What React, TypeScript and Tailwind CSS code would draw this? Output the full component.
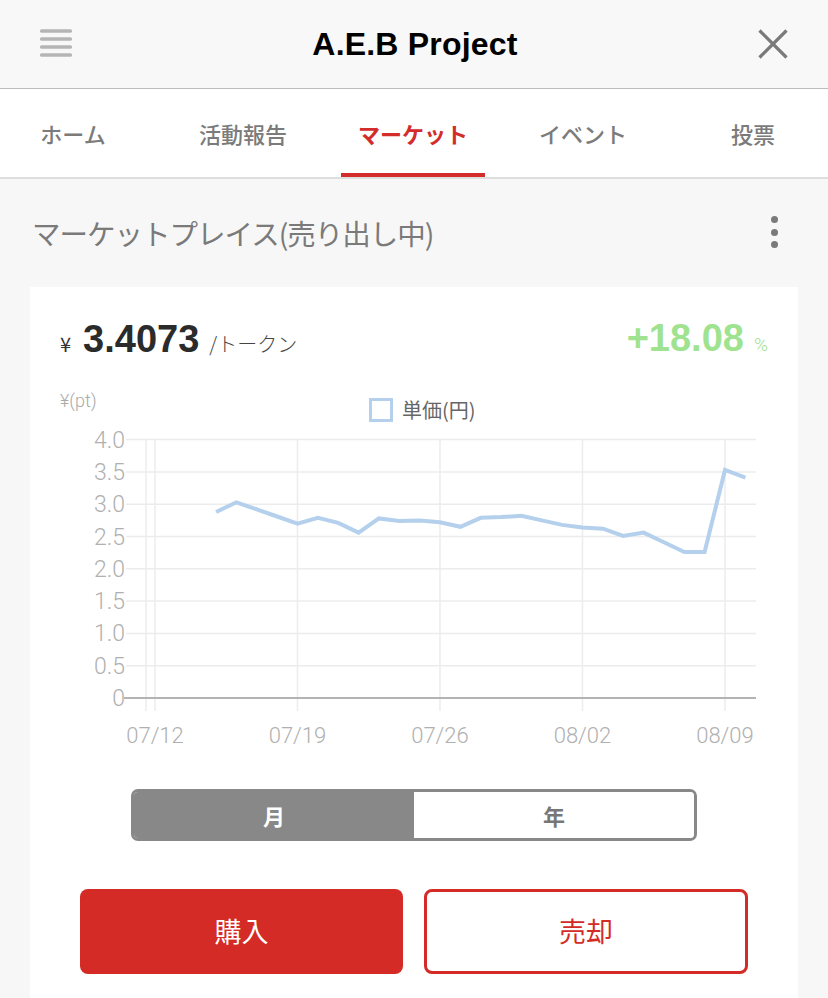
import React from "react";

const JP = '"Noto Sans CJK JP", "Liberation Sans", sans-serif';

const values: number[] = [
  2.88, 3.03, 2.92, 2.81, 2.7, 2.79, 2.71, 2.56, 2.78, 2.74, 2.75, 2.72, 2.65,
  2.79, 2.8, 2.82, 2.75, 2.68, 2.64, 2.62, 2.51, 2.56, 2.41, 2.26, 2.26, 3.53,
  3.41,
];

const dx = (d: number) => 155 + d * 20.357;
const vy = (v: number) => 699 - v * 64.6;

function Chart() {
  const yTicks = [
    { v: 4, l: "4.0" },
    { v: 3.5, l: "3.5" },
    { v: 3, l: "3.0" },
    { v: 2.5, l: "2.5" },
    { v: 2, l: "2.0" },
    { v: 1.5, l: "1.5" },
    { v: 1, l: "1.0" },
    { v: 0.5, l: "0.5" },
    { v: 0, l: "0" },
  ];
  const xTicks = [
    { d: 0, l: "07/12" },
    { d: 7, l: "07/19" },
    { d: 14, l: "07/26" },
    { d: 21, l: "08/02" },
    { d: 28, l: "08/09" },
  ];
  const pts = values.map((v, i) => `${dx(i + 3).toFixed(1)},${vy(v).toFixed(1)}`).join(" ");
  return (
    <svg width="768" height="385" viewBox="30 380 768 385" className="block">
      <text x="60" y="408" fontSize="18" fill="#aaaaaa" fontFamily="Roboto, sans-serif" fontWeight="300">
        ¥(pt)
      </text>
      <rect x="370.5" y="400.5" width="21" height="21" fill="none" stroke="#b4d0ec" strokeWidth="3" />
      <text x="402" y="419" fontSize="20" fill="#666666" fontFamily={JP}>
        単価(円)
      </text>
      {yTicks.map((t) =>
        t.v === 0 ? null : (
          <line key={t.l} x1="126" x2="756" y1={vy(t.v)} y2={vy(t.v)} stroke="#ececec" strokeWidth="1.5" />
        )
      )}
      <line x1="146" x2="146" y1={vy(4)} y2="712" stroke="#ececec" strokeWidth="1.5" />
      {xTicks.map((t) => (
        <line key={t.l} x1={dx(t.d)} x2={dx(t.d)} y1={vy(4)} y2="712" stroke="#ececec" strokeWidth="1.5" />
      ))}
      <line x1="124" x2="756" y1="699" y2="699" stroke="#b3b3b3" strokeWidth="2" />
      {yTicks.map((t) => (
        <text
          key={t.l}
          x="125"
          y={vy(t.v) + 8}
          fontSize="23"
          textAnchor="end"
          fill="#b0b0b0"
          fontFamily="Roboto, sans-serif"
          fontWeight="300"
        >
          {t.l}
        </text>
      ))}
      {xTicks.map((t) => (
        <text
          key={t.l}
          x={dx(t.d)}
          y="744"
          fontSize="22"
          textAnchor="middle"
          fill="#b0b0b0"
          fontFamily="Roboto, sans-serif"
          fontWeight="300"
        >
          {t.l}
        </text>
      ))}
      <polyline points={pts} fill="none" stroke="#b4d0ec" strokeWidth="4" strokeLinejoin="miter" />
    </svg>
  );
}

export default function App() {
  const tabs = ["ホーム", "活動報告", "マーケット", "イベント", "投票"];
  return (
    <div className="w-[828px] h-[998px] overflow-hidden bg-[#f7f7f7] flex flex-col" style={{ fontFamily: JP }}>
      {/* Header */}
      <div className="h-[89px] shrink-0 bg-[#f8f8f8] border-b border-[#bdbdbd] flex items-center justify-between px-[40px]">
        <svg width="32" height="32" viewBox="0 0 32 32">
          {[3, 11, 19, 27].map((y) => (
            <rect key={y} x="0" y={y - 1.75} width="32" height="3.5" rx="1.5" fill="#b5b5b5" />
          ))}
        </svg>
        <div
          className="text-[32px] font-bold text-black leading-none tracking-[0.2px]"
          style={{ fontFamily: '"Liberation Sans", Arial, sans-serif' }}
        >
          A.E.B Project
        </div>
        <svg width="30" height="30" viewBox="0 0 30 30">
          <path d="M1.5 1.5 L28.5 28.5 M28.5 1.5 L1.5 28.5" stroke="#7a7a7a" strokeWidth="3.2" />
        </svg>
      </div>

      {/* Tabs */}
      <div className="h-[90px] shrink-0 bg-white border-b-2 border-[#dedede] overflow-hidden">
        <div className="flex h-full ml-[-12px]">
          {tabs.map((t, i) => (
            <div key={t} className="w-[170px] shrink-0 h-full flex flex-col items-center">
              <div className="flex-1 flex items-center pt-[4px]">
                <span
                  className={
                    i === 2
                      ? "text-[22px] font-bold text-[#d22d2b] leading-none"
                      : "text-[22px] font-medium text-[#7b7b7b] leading-none"
                  }
                >
                  {t}
                </span>
              </div>
              <div className={i === 2 ? "h-[4px] w-[144px] bg-[#d22d2b]" : "h-[4px] w-[144px]"} />
            </div>
          ))}
        </div>
      </div>

      {/* Section title */}
      <div className="h-[108px] shrink-0 flex items-center justify-between pl-[32px] pr-[50px]">
        <span className="text-[28.5px] text-[#7a7a7a] leading-none tracking-[-1px]">
          マーケットプレイス(売り出し中)
        </span>
        <div className="flex flex-col gap-[5.5px] items-center pb-[2px]">
          <div className="w-[7px] h-[7px] rounded-full bg-[#7a7a7a]" />
          <div className="w-[7px] h-[7px] rounded-full bg-[#7a7a7a]" />
          <div className="w-[7px] h-[7px] rounded-full bg-[#7a7a7a]" />
        </div>
      </div>

      {/* Card */}
      <div className="mx-[30px] flex-1 bg-white flex flex-col">
        <div className="pt-[26px] h-[72px] px-[30px] flex items-end justify-between">
          <div className="flex items-baseline">
            <span className="text-[20px] text-[#333] mr-[12px]">¥</span>
            <span
              className="text-[38px] font-bold text-[#2b2b2b] leading-none"
              style={{ fontFamily: '"Liberation Sans", Arial, sans-serif' }}
            >
              3.4073
            </span>
            <span className="text-[20px] text-[#444] ml-[10px] font-light">/トークン</span>
          </div>
          <div className="flex items-baseline">
            <span
              className="text-[38px] font-bold text-[#9fe391] leading-none"
              style={{ fontFamily: '"Liberation Sans", Arial, sans-serif' }}
            >
              +18.08
            </span>
            <span
              className="text-[19px] text-[#9fe391] ml-[10px]"
              style={{ fontFamily: 'Roboto, sans-serif', fontWeight: 300 }}
            >
              %
            </span>
          </div>
        </div>
        <div className="mt-[20px]">
          <Chart />
        </div>
        <div className="mt-[25px] mx-auto w-[566px] h-[52px] border-[3px] border-[#888888] rounded-[7px] overflow-hidden flex">
          <div className="w-1/2 bg-[#888888] flex items-center justify-center text-white text-[22px] font-bold">
            月
          </div>
          <div className="w-1/2 bg-white flex items-center justify-center text-[#777] text-[22px] font-bold">
            年
          </div>
        </div>
        <div className="mt-[48px] px-[50px] flex gap-[21px]">
          <div className="w-[323px] h-[85px] rounded-[8px] bg-[#d42b26] flex items-center justify-center text-white text-[27px] font-normal">
            購入
          </div>
          <div className="w-[324px] h-[85px] rounded-[8px] border-[3px] border-[#d42b26] bg-white flex items-center justify-center text-[#d42b26] text-[27px] font-normal">
            売却
          </div>
        </div>
      </div>
    </div>
  );
}
